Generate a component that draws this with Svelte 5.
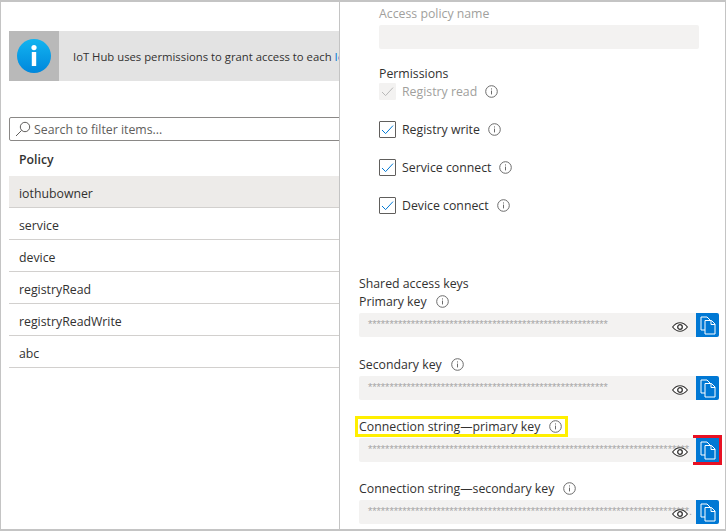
<script>
  const policies = ['iothubowner', 'service', 'device', 'registryRead', 'registryReadWrite', 'abc'];
  const perms = [
    { name: 'Registry read', disabled: true },
    { name: 'Registry write' },
    { name: 'Service connect' },
    { name: 'Device connect' }
  ];
  const mask = (n) => '*'.repeat(n);
  const keys = [
    { label: 'Primary key', stars: 56 },
    { label: 'Secondary key', stars: 56 },
    { label: 'Connection string—primary key', stars: 75, marked: true },
    { label: 'Connection string—secondary key', stars: 75, tail: true }
  ];
</script>

{#snippet info()}
  <svg class="info" width="13" height="13" viewBox="0 0 13 13">
    <circle cx="6.500" cy="6.500" r="5.800" fill="none" stroke="#6b6b6b" />
    <path d="M6.500 5.600v3.800M6.500 3.400v1.100" stroke="#6b6b6b" fill="none" />
  </svg>
{/snippet}

<div class="frame">
  <section class="left">
    <div class="banner">
      <div class="banner-icon">
        <svg width="34" height="34" viewBox="0 0 34 34">
          <defs>
            <linearGradient id="blue" x1="0" y1="0" x2="0" y2="1">
              <stop offset="0" stop-color="#12b4f0" />
              <stop offset="1" stop-color="#0087dc" />
            </linearGradient>
          </defs>
          <circle cx="17" cy="17" r="17" fill="url(#blue)" />
          <rect x="14.800" y="13" width="4.400" height="14" fill="#fff" />
          <circle cx="17" cy="8.600" r="2.600" fill="#fff" />
        </svg>
      </div>
      <span class="banner-text">IoT Hub uses permissions to grant access to each <span class="link">IoT hub endpoint.</span></span>
    </div>

    <div class="search">
      <svg width="16" height="16" viewBox="0 0 16 16">
        <circle cx="10" cy="6" r="4.700" fill="none" stroke="#605e5c" />
        <path d="M6.600 9.400 1 15" stroke="#605e5c" fill="none" />
      </svg>
      <span>Search to filter items...</span>
    </div>

    <div class="head">Policy</div>
    {#each policies as p, i}
      <div class="row" class:selected={i === 0}>{p}</div>
    {/each}
  </section>

  <section class="right">
    <div class="muted name-label">Access policy name</div>
    <div class="name-input"></div>

    <div class="perm-title">Permissions</div>
    <div class="perms">
      {#each perms as perm}
        <div class="perm" class:disabled={perm.disabled}>
          <span class="check">
            <svg width="15" height="15" viewBox="0 0 15 15">
              <path d="M2 8l3.600 3.600L13 3.600" fill="none" stroke={perm.disabled ? '#b8b8b8' : '#0078d4'} />
            </svg>
          </span>
          <span>{perm.name}</span>
          {@render info()}
        </div>
      {/each}
    </div>

    <div class="keys">
      <div class="keys-title">Shared access keys</div>
      {#each keys as k}
        <div class="key">
          <div class="key-label">
            <span class="label-wrap" class:marked={k.marked}>
              <span>{k.label}</span>
              {@render info()}
            </span>
          </div>
          <div class="key-line">
            <div class="key-input">
              <span class="stars">{mask(k.stars)}{k.tail ? '.' : ''}</span>
              <svg class="eye" width="16" height="10" viewBox="0 0 16 10">
                <path d="M.6 5C3 2 5.300 .8 8 .8S13 2 15.400 5C13 8 10.700 9.200 8 9.200S3 8 .6 5Z" fill="#fff" stroke="#323130" stroke-width="1.100" />
                <circle cx="8" cy="5" r="2.300" fill="none" stroke="#323130" stroke-width="1.300" />
              </svg>
            </div>
            <button class="copy" class:outlined={k.marked} aria-label="Copy">
              <svg width="16" height="19" viewBox="0 0 16 19">
                <path d="M10.500 14H1V1h6l3.500 3.500" fill="none" stroke="#fff" />
                <path d="M5 4.500h6.500L15 8v10H5Z" fill="#0078d4" stroke="#fff" />
                <path d="M11 4.500V8.500h4" fill="none" stroke="#fff" />
              </svg>
            </button>
          </div>
        </div>
      {/each}
    </div>
  </section>
</div>

<style>
  :global(body) {
    margin: 0;
    background: #fff;
  }

  .frame {
    box-sizing: border-box;
    width: 726px;
    height: 531px;
    display: grid;
    grid-template-columns: 339px 1fr;
    border: 1px solid #c4c4c4;
    border-top-width: 2px;
    border-bottom-width: 2px;
    font-family: "Open Sans", sans-serif;
    font-size: 12.3px;
    color: #323130;
    overflow: hidden;
  }

  .left {
    box-sizing: border-box;
    border-right: 1px solid #c4c4c4;
    padding: 29px 0 0 8px;
    overflow: hidden;
  }

  .banner {
    display: flex;
    align-items: center;
    height: 50px;
    background: #e3e3e3;
    white-space: nowrap;
    font-size: 11.3px;
  }

  .banner-icon {
    flex: none;
    width: 50px;
    height: 50px;
    background: #b9b9b9;
    display: flex;
    align-items: center;
    justify-content: center;
  }

  .banner-text {
    margin-left: 14px;
  }

  .link {
    color: #0078d4;
  }

  .search {
    box-sizing: border-box;
    height: 24px;
    margin-top: 36px;
    margin-right: -2px;
    border: 1px solid #8a8886;
    border-radius: 2px;
    display: flex;
    align-items: center;
    gap: 3px;
    padding-left: 5px;
    color: #605e5c;
  }

  .head {
    height: 35px;
    line-height: 37px;
    padding-left: 10px;
    font-weight: 600;
  }

  .row {
    box-sizing: border-box;
    height: 32px;
    line-height: 35px;
    padding-left: 10px;
    border-bottom: 1px solid #d2d0ce;
  }

  .row.selected {
    background: #edebe9;
  }

  .right {
    padding-left: 19px;
    padding-right: 6px;
    overflow: hidden;
  }

  .muted {
    color: #a19f9d;
  }

  .name-label {
    margin-left: 20px;
    height: 22px;
    line-height: 21px;
    margin-top: 1px;
  }

  .name-input {
    margin-left: 20px;
    margin-right: 20px;
    height: 24px;
    background: #f3f2f1;
    border-radius: 2px;
  }

  .perm-title {
    margin: 16px 0 0 20px;
    height: 18px;
    line-height: 18px;
  }

  .perms {
    margin-left: 20px;
    display: flex;
    flex-direction: column;
    gap: 21px;
  }

  .perm {
    display: flex;
    align-items: center;
    height: 17px;
    gap: 6px;
  }

  .perm.disabled {
    color: #a19f9d;
  }

  .check {
    box-sizing: border-box;
    width: 17px;
    height: 17px;
    border: 1px solid #605e5c;
    border-radius: 1px;
    display: flex;
    align-items: center;
    justify-content: center;
  }

  .disabled .check {
    background: #f3f2f1;
    border-color: #f3f2f1;
  }

  .info {
    flex: none;
  }

  .perm .info {
    margin-left: 2px;
  }

  .keys {
    margin-top: 61px;
  }

  .keys-title {
    height: 17px;
    line-height: 18px;
  }

  .key {
    margin-bottom: 17px;
  }

  .key:nth-child(2) {
    margin-bottom: 18px;
  }

  .key-label {
    height: 19px;
    display: flex;
    align-items: center;
  }

  .label-wrap {
    display: inline-flex;
    align-items: center;
    gap: 9px;
    line-height: 15px;
  }

  .label-wrap.marked {
    margin-left: -1px;
    padding: 0 3px 0 1px;
    outline: 3px solid #ffef00;
  }

  .key-line {
    display: flex;
    margin-top: 2px;
  }

  .key-input {
    position: relative;
    flex: 1;
    min-width: 0;
    height: 24px;
    background: #f3f2f1;
    border-radius: 2px 0 0 2px;
    overflow: hidden;
  }

  .stars {
    position: absolute;
    left: 9px;
    top: 1px;
    font-family: "Liberation Sans", sans-serif;
    font-size: 11px;
    line-height: 20px;
    color: #a8a8a8;
    white-space: nowrap;
  }

  .eye {
    position: absolute;
    right: 8px;
    top: 9px;
  }

  .copy {
    flex: none;
    width: 23px;
    height: 24px;
    padding: 0;
    border: none;
    border-radius: 0 2px 2px 0;
    background: #0078d4;
    display: flex;
    align-items: center;
    justify-content: center;
  }

  .copy.outlined {
    border-radius: 0;
    outline: 3px solid #e81123;
  }
</style>
